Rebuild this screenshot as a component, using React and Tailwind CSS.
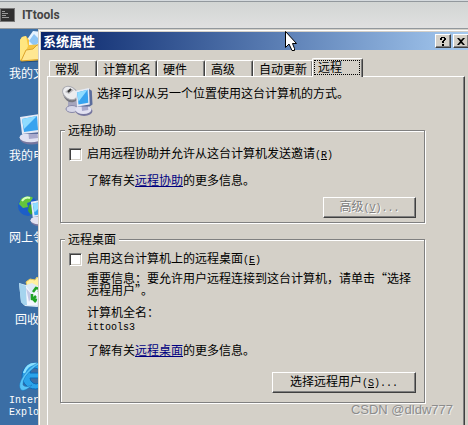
import React from 'react';

const SANS = "font-['Noto_Sans_CJK_SC',sans-serif]";
const MONO = "font-['Liberation_Mono',monospace] text-[10px]";

// shared shape for "my computer", the network icon and the remote icon
const Monitor = ({ x = 0, y = 0 }) => (
  <g transform={`translate(${x} ${y})`}>
    <ellipse cx="13" cy="25" rx="12" ry="5.5" fill="#77779f" />
    <ellipse cx="12" cy="23.5" rx="11.5" ry="4.8" fill="#e2e2f2" />
    <path d="M9 16 L18 15 L19 24 L10 25 Z" fill="#a9a9cc" />
    <path d="M2 4 L20 1 L24 3 L25 18 L21 20 L4 20 Z" fill="#5b6c9c" />
    <path d="M1 3 L20 0 L21 18 L3 20 Z" fill="#e6ebf6" />
    <path d="M3 5 L18 2 L19 16 L5 18 Z" fill="#37a3ef" />
    <path d="M3 5 L18 2 L5 15 Z" fill="#8fdcff" />
  </g>
);

const DocumentsIcon = () => (
  <svg width="32" height="32" viewBox="0 0 32 32">
    <path d="M8 10 L15 0 L28 1 L29 16 L20 24 L10 20 Z" fill="#e6f3ff" />
    <path d="M11 10 L16 3 L22 9 L17 16 Z" fill="#8fc6f5" />
    <path d="M2 9 L4 6 L8 5 L11 9 L11 14 L26 13 L29 15 L27 29 L4 31 L2 29 Z" fill="#f5c542" />
    <path d="M2 9 L4 6 L8 5 L10 15 L4 30 L2 28 Z" fill="#ffe680" />
    <path d="M3 30 L8 19 L15 18 L19 14 L30 13 L27 28 Z" fill="#ffe792" stroke="#dca32b" />
    <path d="M3 31 L22 30" stroke="#244a78" />
  </svg>
);

const ComputerIcon = () => (
  <svg width="32" height="32" viewBox="0 0 32 32">
    <Monitor x={1} y={1} />
  </svg>
);

const NetworkIcon = () => (
  <svg width="32" height="32" viewBox="0 0 32 32">
    <circle cx="10" cy="11" r="10" fill="#1d5ec8" />
    <path d="M3 4 C7 0 14 1 15 3 L12 7 L9 8 L10 12 L5 13 L1 9 Z" fill="#63c63c" />
    <path d="M11 10 L18 8 L19 14 L13 20 L10 16 Z" fill="#3ea52c" />
    <path d="M4 6 C6 3 9 2 12 3" stroke="#d8ffc0" strokeWidth="2" fill="none" />
    <g transform="translate(12 4) scale(.9)">
      <Monitor />
    </g>
  </svg>
);

const RecycleIcon = () => (
  <svg width="32" height="32" viewBox="0 0 32 32">
    <path d="M8 5 L12 2 L17 3 L19 0 L27 5 L24 13 L10 12 Z" fill="#fff0a0" stroke="#e6c75c" />
    <path d="M1 6 L8 8 L14 6 L20 9 L30 7 L27 27 L19 30 L7 29 L3 25 Z" fill="#dceaf6" />
    <path d="M1 6 L8 9 L9 28 L6 28 L3 25 Z" fill="#a5d4ee" />
    <path d="M8 9 L14 17 L20 9 L19 28 L9 28 Z" fill="#f4f7ff" />
    <path d="M8 11 L14 18 L11 25 Z" fill="#c3c9e6" />
    <path d="M15 15 L18 11 L23 12 M21 9 L24 13 L20 15" stroke="#20a326" strokeWidth="2.5" fill="none" />
    <path d="M14 17 L14 22 L19 23 M18 19 L15 22 L18 25" stroke="#20a326" strokeWidth="2.5" fill="none" />
    <path d="M21 24 L26 20 L24 16" stroke="#20a326" strokeWidth="2.5" fill="none" />
  </svg>
);

const ExplorerIcon = () => (
  <svg width="32" height="32" viewBox="0 0 32 32">
    <path
      d="M30 18 A13 13 0 1 0 28 24 L21 24 Q18 26 15 24 Q12 22 12 19 L30 19 Z M12 14 Q13 9 17 9 Q22 10 22 14 Z"
      fill="#2ba3ea"
      stroke="#0d6ab8"
      fillRule="evenodd"
    />
    <path d="M6 14 Q9 4 19 5" stroke="#8be0ff" strokeWidth="2.5" fill="none" />
    <path
      d="M3 31 Q-1 26 6 16 Q15 4 25 2 Q31 1 29 6 Q26 2 17 8 Q4 18 5 26 Q8 29 14 26 Q7 33 3 31 Z"
      fill="#58c4f7"
      stroke="#1571b8"
      strokeWidth=".5"
    />
  </svg>
);

const RemoteIcon = () => (
  <svg width="32" height="32" viewBox="0 0 32 32" className="shrink-0">
    <path d="M6 12 L15 14 L15 25 L6 24 Z" fill="#a6a6bd" />
    <ellipse cx="10" cy="24" rx="6" ry="3.5" fill="#d6d6e6" stroke="#8888a8" />
    <ellipse cx="9" cy="10" rx="8" ry="7" fill="#77777f" transform="rotate(35 9 10)" />
    <ellipse cx="8" cy="8" rx="8" ry="6" fill="#ececee" stroke="#aaaab0" transform="rotate(35 8 8)" />
    <path d="M3 7 Q7 2 12 5 L7 9 Z" fill="#bcbcc0" />
    <path d="M6 7 L9 4" stroke="#333" strokeWidth="2" />
    <g transform="translate(13 3) scale(.7 .92)">
      <Monitor />
    </g>
  </svg>
);

const shortcuts = [
  { name: '我的文档', Icon: DocumentsIcon },
  { name: '我的电脑', Icon: ComputerIcon },
  { name: '网上邻居', Icon: NetworkIcon },
  { name: '回收站', Icon: RecycleIcon },
  { name: 'Internet Explorer', Icon: ExplorerIcon, latin: true },
];

const tabs = [
  { name: '常规', width: 'w-12' },
  { name: '计算机名', width: 'w-[60px]' },
  { name: '硬件', width: 'w-12' },
  { name: '高级', width: 'w-12' },
  { name: '自动更新', width: 'w-[60px]' },
];

// keyboard hint such as (R)
const Key = ({ children, dots }) => (
  <span className={MONO}>
    (<u>{children}</u>){dots && '...'}
  </span>
);

const PushButton = ({ className, children, ...props }) => (
  <button
    type="button"
    className={`block ml-auto h-[21px] border border-t-white border-l-white border-r-[#404040] border-b-[#404040] shadow-[inset_-1px_-1px_0_#808080] leading-4 text-black disabled:text-[#808080] disabled:[text-shadow:1px_1px_0_#fff] ${className}`}
    {...props}
  >
    {children}
  </button>
);

const CaptionButton = ({ label, className, children }) => (
  <button
    type="button"
    aria-label={label}
    className={`w-4 h-3.5 shrink-0 flex items-center justify-center bg-[#d4d0c8] border border-t-white border-l-white border-r-[#404040] border-b-[#404040] shadow-[inset_-1px_-1px_0_#808080] ${className}`}
  >
    {children}
  </button>
);

const Group = ({ title, className, children }) => (
  <fieldset
    className={`border border-[#808080] shadow-[1px_1px_0_#fff,inset_1px_1px_0_#fff] px-2 ${className}`}
  >
    <legend className="bg-[#d4d0c8] h-4 leading-4 -ml-1 px-[3px]">{title}</legend>
    {children}
  </fieldset>
);

const CheckRow = ({ id, hint, children }) => (
  <div className="flex items-center gap-[5px] h-4">
    <input
      id={id}
      type="checkbox"
      className="appearance-none w-[13px] h-[13px] shrink-0 bg-white border border-t-[#808080] border-l-[#808080] border-r-white border-b-white shadow-[inset_1px_1px_0_#404040,inset_-1px_-1px_0_#d4d0c8] checked:bg-black"
    />
    <label htmlFor={id} className="whitespace-nowrap">
      {children}
      <Key>{hint}</Key>
    </label>
  </div>
);

const LearnMore = ({ topic, className }) => (
  <p className={`pl-[18px] ${className}`}>
    了解有关
    <a href="#help" className="text-[#000080] underline">{topic}</a>
    的更多信息。
  </p>
);

const Cursor = () => (
  <svg width="12" height="21" viewBox="0 0 12 21" className="absolute left-[285px] top-[31px]">
    <path
      d="M.5 .5 V16.5 L4 13 L7 19.5 H9.5 V17.5 L7.5 12.5 H11.5 Z"
      fill="#fff"
      stroke="#000"
      strokeLinejoin="miter"
    />
  </svg>
);

const Desktop = () => (
  <nav className="w-[38px] shrink-0 overflow-hidden pt-0.5 text-white">
    <div className="w-[68px] flex flex-col gap-[33px]">
      {shortcuts.map(({ name, Icon, latin }) => (
        <button key={name} type="button" className="flex flex-col items-center gap-0.5">
          <Icon />
          <span className={latin ? `${MONO} w-[50px] text-left leading-3 pt-0.5` : 'leading-[15px] pr-0.5'}>{name}</span>
        </button>
      ))}
    </div>
  </nav>
);

const SystemProperties = () => (
  <section className="flex-1 min-w-0 flex flex-col bg-[#d4d0c8] border-l border-t border-[#d4d0c8] shadow-[inset_1px_1px_0_#fff] pl-0.5 pt-0.5 overflow-hidden">
    <header className="h-[18px] shrink-0 flex items-center bg-linear-to-r from-[#0a246a] to-[#a6caf0] pl-0.5">
      <h1 className="flex-1 text-white font-bold text-[13px] leading-4">系统属性</h1>
      <CaptionButton label="Help" className="mr-0.5">
        <svg width="6" height="9" viewBox="0 0 6 9" shapeRendering="crispEdges">
          <path d="M0 1h2v2H0z M1 0h4v1H1z M4 1h2v2H4z M3 3h2v1H3z M2 4h2v2H2z M2 7h2v2H2z" />
        </svg>
      </CaptionButton>
      <CaptionButton label="Close" className="-mr-px">
        <svg width="8" height="7" viewBox="0 0 8 7">
          <path d="M0 0h2l2 2 2-2h2L5 3.5 8 7H6L4 5 2 7H0l3-3.5z" />
        </svg>
      </CaptionButton>
    </header>

    <div role="tablist" className="flex items-end pl-2 pt-2 shrink-0">
      {tabs.map((tab) => (
        <button
          key={tab.name}
          type="button"
          role="tab"
          className={`${tab.width} h-4 shrink-0 px-[5px] text-left leading-4 whitespace-nowrap rounded-t-xs border border-b-0 border-t-white border-l-white border-r-[#404040] shadow-[inset_-1px_0_0_#808080]`}
        >
          {tab.name}
        </button>
      ))}
      <button
        type="button"
        role="tab"
        aria-selected="true"
        className="relative -mb-px w-[51px] h-[19px] shrink-0 -ml-px p-px pb-0.5 bg-[#d4d0c8] rounded-t-xs border border-b-0 border-t-white border-l-white border-r-[#404040] shadow-[inset_-1px_0_0_#808080]"
      >
        <span className="block h-[15px] mr-px pl-[3px] text-left leading-3 border border-dotted border-black">远程</span>
      </button>
    </div>

    <div className="flex-1 ml-1.5 mr-[3px] pl-3 pr-[39px] pt-2 border border-b-0 border-t-white border-l-white border-r-[#404040] shadow-[inset_-1px_0_0_#808080]">
      <div className="flex gap-[3px] pl-0.5 h-[33px]">
        <RemoteIcon />
        <p>选择可以从另一个位置使用这台计算机的方式。</p>
      </div>

      <Group title="远程协助" className="mt-1 pt-2 pb-1">
        <CheckRow id="assist" hint="R">启用远程协助并允许从这台计算机发送邀请</CheckRow>
        <LearnMore topic="远程协助" className="mt-2.5" />
        <PushButton disabled className="w-[93px] mt-[9px]">
          高级<Key dots>V</Key>
        </PushButton>
      </Group>

      <Group title="远程桌面" className="mt-2 pt-1 pb-[9px]">
        <CheckRow id="desktop" hint="E">启用这台计算机上的远程桌面</CheckRow>
        <p className="pl-[18px] mt-[5px] leading-3">
          重要信息：要允许用户远程连接到这台计算机，请单击“选择远程用户”。
        </p>
        <p className="pl-[18px] mt-2">计算机全名：</p>
        <p className={`pl-[18px] leading-4 ${MONO}`}>ittools3</p>
        <LearnMore topic="远程桌面" className="mt-1.5" />
        <PushButton className="w-36 mt-3.5">
          选择远程用户<Key dots>S</Key>
        </PushButton>
      </Group>
    </div>
  </section>
);

export default function App() {
  return (
    <div lang="zh-CN" className={`relative h-screen flex flex-col overflow-hidden bg-[#3b6ea5] text-xs leading-4 text-black ${SANS}`}>
      <div className="h-[29px] shrink-0 pt-px bg-[#d5dade]">
        <div className="h-7 flex items-center gap-[7px] border-y border-[#92989d] bg-linear-to-b from-[#d2d5d3] to-[#e0e0e0]">
          <svg width="15" height="14" viewBox="0 0 15 14">
            <rect x=".5" y=".5" width="14" height="13" fill="#303030" stroke="#777" />
            <path d="M2 3.5h3M2 5.5h6M2 7.5h4M2 9.5h7" stroke="#999" />
          </svg>
          <span className="font-['Roboto',sans-serif] font-bold text-[#444]">ITtools</span>
        </div>
      </div>
      <main className="flex-1 min-h-0 flex">
        <Desktop />
        <SystemProperties />
      </main>
      <Cursor />
      <span className="absolute right-[15px] bottom-[7px] font-['Liberation_Sans',sans-serif] text-[13px] leading-4 text-[#8c8c8c] [text-shadow:1px_1px_0_#eee]">
        CSDN @dldw777
      </span>
    </div>
  );
}
